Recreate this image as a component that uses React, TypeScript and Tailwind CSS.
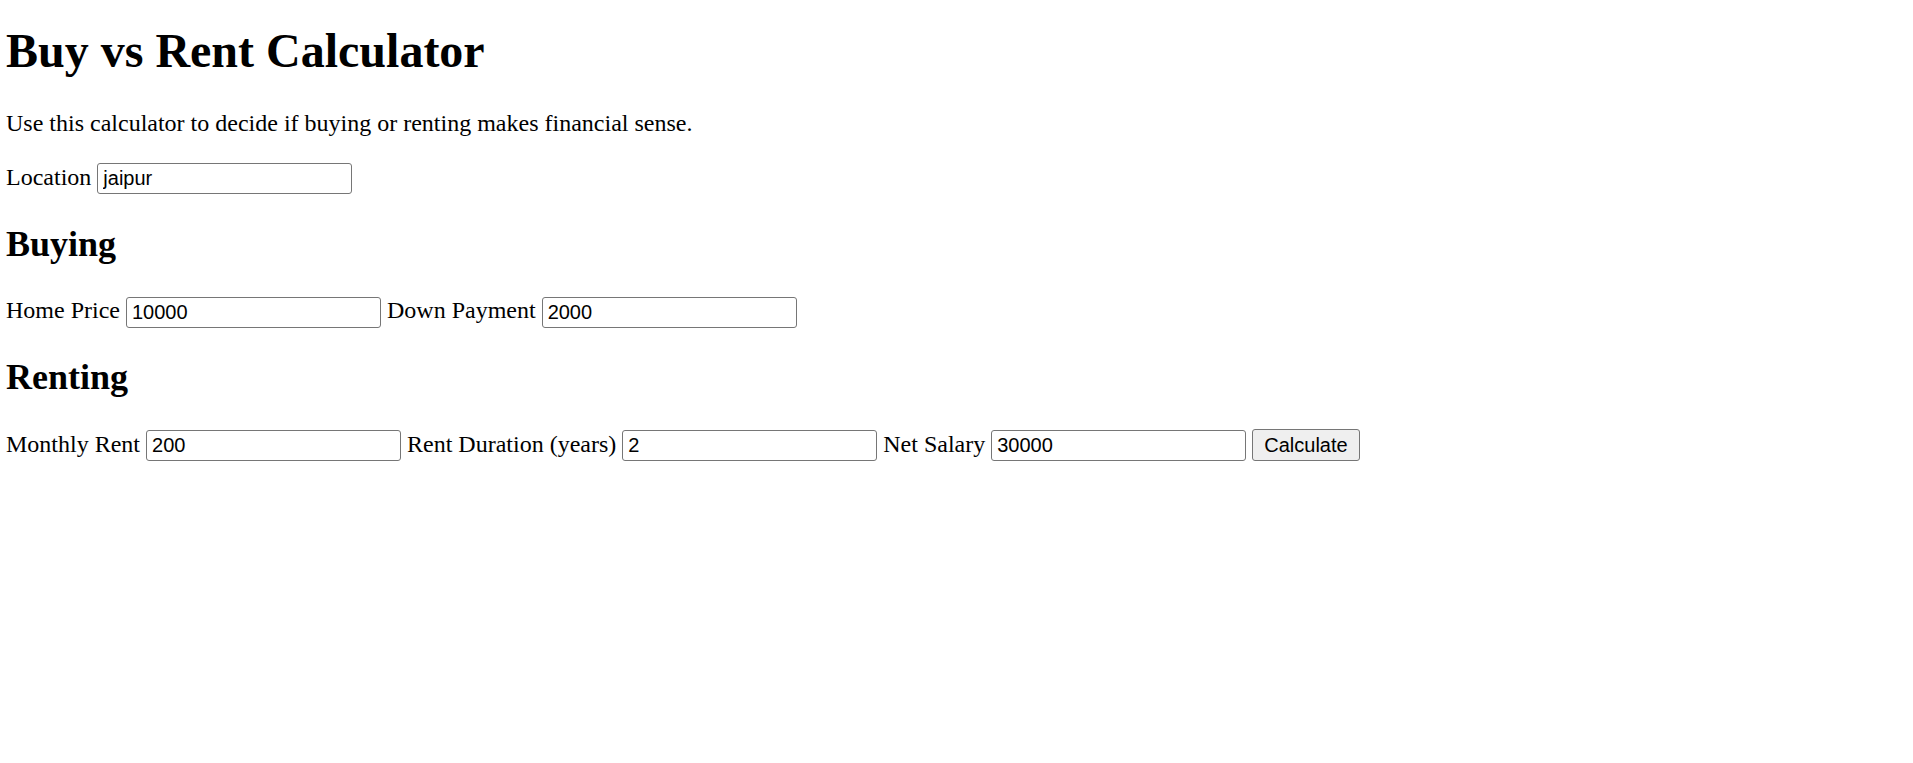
import React from "react";

function Field({ label, value }: { label: string; value: string }) {
  return (
    <>
      <span>{label}</span>
      <input
        type="text"
        defaultValue={value}
        className="w-[255px] h-[31px] mt-[2px] border border-[#767676] rounded-[3px] pl-[5px] pr-[3px] text-[20px] text-black bg-white outline-none"
        style={{ fontFamily: '"Liberation Sans", Arial, sans-serif' }}
      />
    </>
  );
}

export default function App() {
  return (
    <div
      className="min-h-[763px] bg-white text-black pl-[6px] pt-[23px]"
      style={{ fontFamily: '"Liberation Serif", "Times New Roman", serif' }}
    >
      <h1 className="text-[48px] font-bold leading-[55px] mb-[32px]">Buy vs Rent Calculator</h1>
      <p className="text-[24px] leading-[27.6px] mb-[24px]">
        Use this calculator to decide if buying or renting makes financial sense.
      </p>
      <div className="flex items-center h-[32px] gap-[6px] text-[24px] leading-[27.6px]">
        <Field label="Location" value="jaipur" />
      </div>
      <h2 className="text-[36px] font-bold leading-[41.4px] mt-[30px] mb-[30px]">Buying</h2>
      <div className="flex items-center h-[32px] gap-[6px] text-[24px] leading-[27.6px]">
        <Field label="Home Price" value="10000" />
        <Field label="Down Payment" value="2000" />
      </div>
      <h2 className="text-[36px] font-bold leading-[41.4px] mt-[30px] mb-[30px]">Renting</h2>
      <div className="flex items-center h-[32px] gap-[6px] text-[24px] leading-[27.6px]">
        <Field label="Monthly Rent" value="200" />
        <Field label="Rent Duration (years)" value="2" />
        <Field label="Net Salary" value="30000" />
        <button
          type="button"
          className="h-[32px] mt-[2px] px-[11px] border border-[#767676] rounded-[3px] bg-[#efefef] text-[20px] leading-[23px] text-black"
          style={{ fontFamily: '"Liberation Sans", Arial, sans-serif' }}
        >
          Calculate
        </button>
      </div>
    </div>
  );
}
